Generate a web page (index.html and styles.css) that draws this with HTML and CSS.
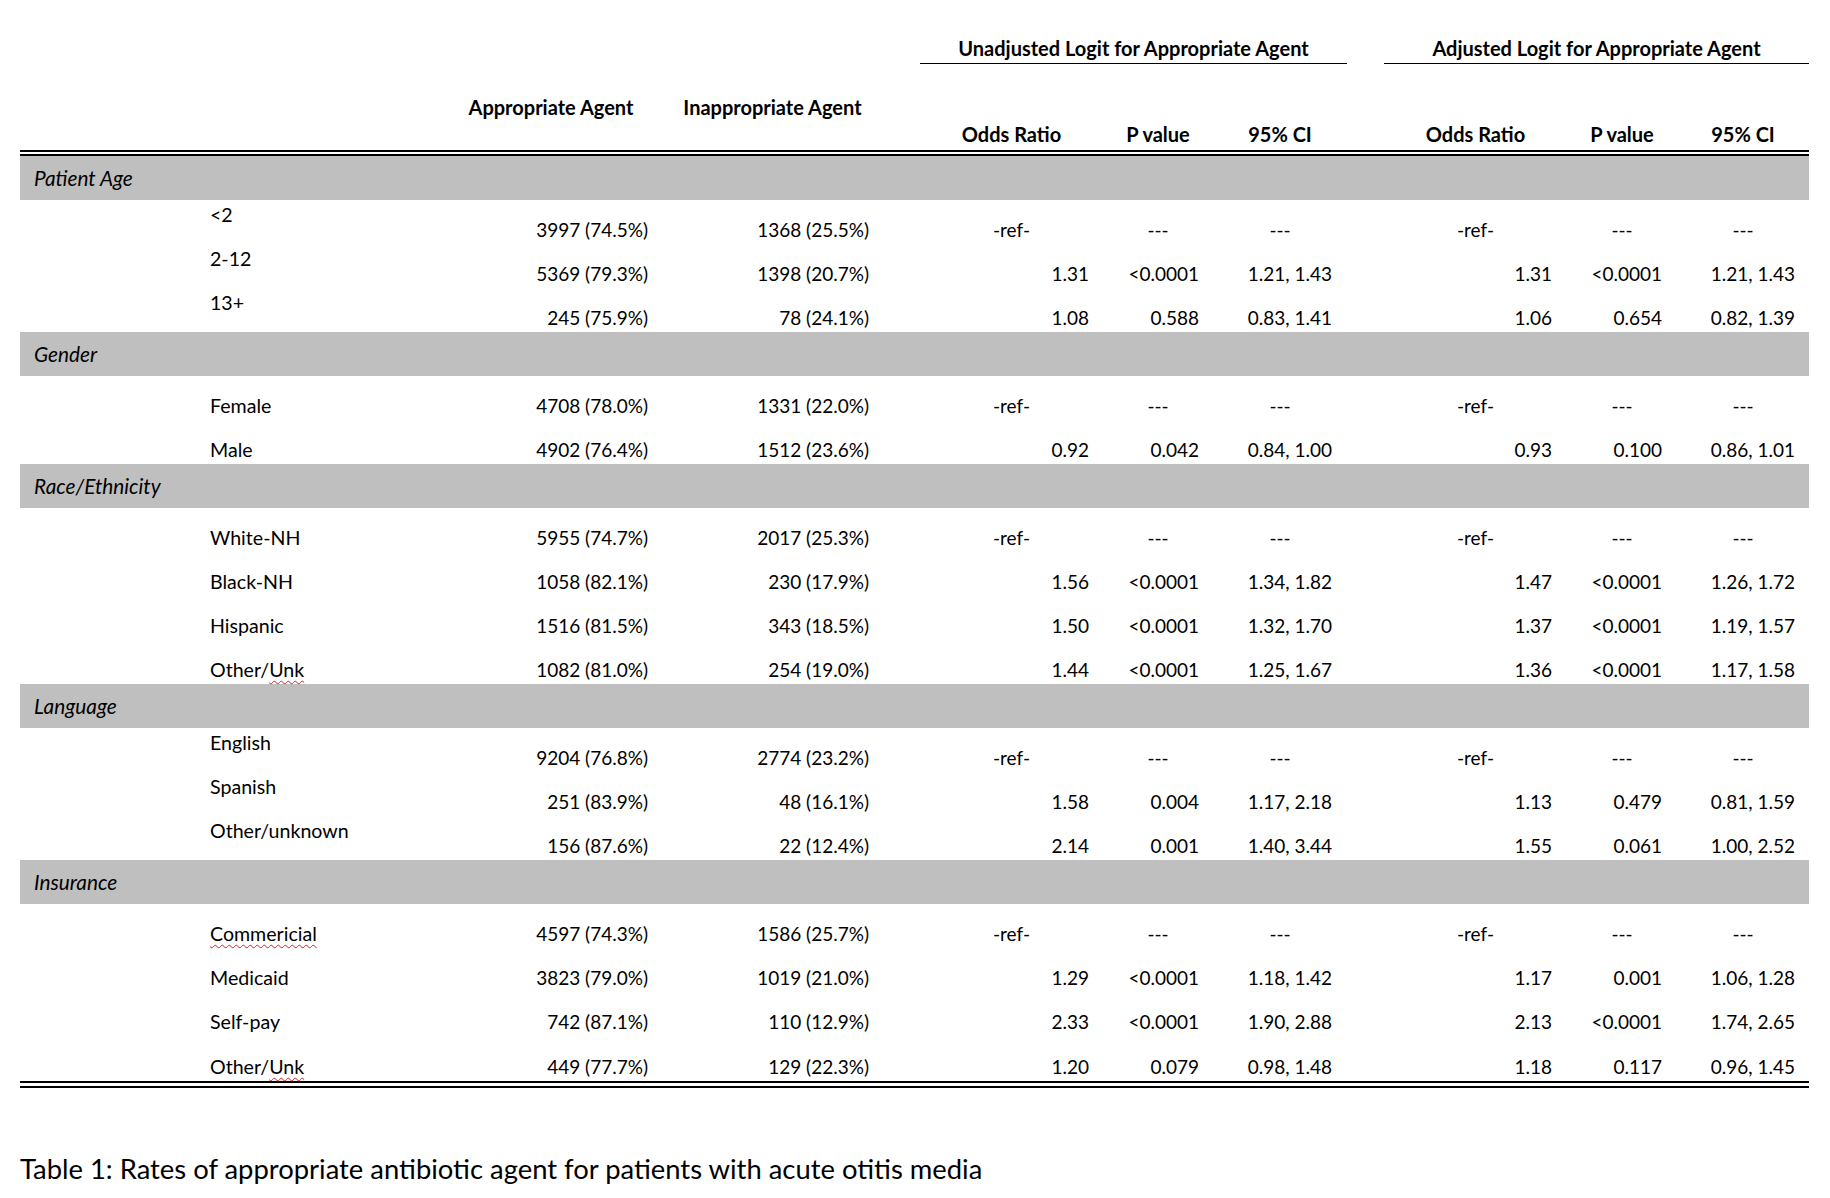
FILE: index.html
```html
<!DOCTYPE html>
<html lang="en">
<head>
<meta charset="utf-8">
<title>Table 1</title>
<link rel="stylesheet" href="styles.css">
</head>
<body>
<div class="page">
  <div class="tbl">
    <div class="grid hrow-top">
      <div class="span5"></div>
      <div class="grp span3">Unadjusted Logit for Appropriate Agent</div>
      <div></div>
      <div class="grp span3">Adjusted Logit for Appropriate Agent</div>
    </div>
    <div class="grid hrow-sub">
      <div></div><div></div>
      <div class="h h-main">Appropriate Agent</div>
      <div class="h h-main">Inappropriate Agent</div>
      <div></div>
      <div class="h">Odds Ratio</div>
      <div class="h">P value</div>
      <div class="h">95% CI</div>
      <div></div>
      <div class="h">Odds Ratio</div>
      <div class="h">P value</div>
      <div class="h">95% CI</div>
    </div>

    <div class="tbody">
      <div class="cat">Patient Age</div>
      <div class="grid row split">
        <div></div><div class="lbl">&lt;2</div><div class="num">3997 (74.5%)</div><div class="num">1368 (25.5%)</div><div></div>
        <div class="ctr">-ref-</div><div class="ctr">---</div><div class="ctr">---</div><div></div>
        <div class="ctr">-ref-</div><div class="ctr">---</div><div class="ctr">---</div>
      </div>
      <div class="grid row split">
        <div></div><div class="lbl">2-12</div><div class="num">5369 (79.3%)</div><div class="num">1398 (20.7%)</div><div></div>
        <div class="num">1.31</div><div class="num">&lt;0.0001</div><div class="num r15">1.21, 1.43</div><div></div>
        <div class="num r15">1.31</div><div class="num r15">&lt;0.0001</div><div class="num">1.21, 1.43</div>
      </div>
      <div class="grid row split">
        <div></div><div class="lbl">13+</div><div class="num">245 (75.9%)</div><div class="num">78 (24.1%)</div><div></div>
        <div class="num">1.08</div><div class="num">0.588</div><div class="num r15">0.83, 1.41</div><div></div>
        <div class="num r15">1.06</div><div class="num r15">0.654</div><div class="num">0.82, 1.39</div>
      </div>

      <div class="cat">Gender</div>
      <div class="grid row">
        <div></div><div class="lbl">Female</div><div class="num">4708 (78.0%)</div><div class="num">1331 (22.0%)</div><div></div>
        <div class="ctr">-ref-</div><div class="ctr">---</div><div class="ctr">---</div><div></div>
        <div class="ctr">-ref-</div><div class="ctr">---</div><div class="ctr">---</div>
      </div>
      <div class="grid row">
        <div></div><div class="lbl">Male</div><div class="num">4902 (76.4%)</div><div class="num">1512 (23.6%)</div><div></div>
        <div class="num">0.92</div><div class="num">0.042</div><div class="num r15">0.84, 1.00</div><div></div>
        <div class="num r15">0.93</div><div class="num r15">0.100</div><div class="num">0.86, 1.01</div>
      </div>

      <div class="cat">Race/Ethnicity</div>
      <div class="grid row">
        <div></div><div class="lbl">White-NH</div><div class="num">5955 (74.7%)</div><div class="num">2017 (25.3%)</div><div></div>
        <div class="ctr">-ref-</div><div class="ctr">---</div><div class="ctr">---</div><div></div>
        <div class="ctr">-ref-</div><div class="ctr">---</div><div class="ctr">---</div>
      </div>
      <div class="grid row">
        <div></div><div class="lbl">Black-NH</div><div class="num">1058 (82.1%)</div><div class="num">230 (17.9%)</div><div></div>
        <div class="num">1.56</div><div class="num">&lt;0.0001</div><div class="num r15">1.34, 1.82</div><div></div>
        <div class="num r15">1.47</div><div class="num r15">&lt;0.0001</div><div class="num">1.26, 1.72</div>
      </div>
      <div class="grid row">
        <div></div><div class="lbl">Hispanic</div><div class="num">1516 (81.5%)</div><div class="num">343 (18.5%)</div><div></div>
        <div class="num">1.50</div><div class="num">&lt;0.0001</div><div class="num r15">1.32, 1.70</div><div></div>
        <div class="num r15">1.37</div><div class="num r15">&lt;0.0001</div><div class="num">1.19, 1.57</div>
      </div>
      <div class="grid row">
        <div></div><div class="lbl">Other/<span class="sp">Unk</span></div><div class="num">1082 (81.0%)</div><div class="num">254 (19.0%)</div><div></div>
        <div class="num">1.44</div><div class="num">&lt;0.0001</div><div class="num r15">1.25, 1.67</div><div></div>
        <div class="num r15">1.36</div><div class="num r15">&lt;0.0001</div><div class="num">1.17, 1.58</div>
      </div>

      <div class="cat">Language</div>
      <div class="grid row split">
        <div></div><div class="lbl">English</div><div class="num">9204 (76.8%)</div><div class="num">2774 (23.2%)</div><div></div>
        <div class="ctr">-ref-</div><div class="ctr">---</div><div class="ctr">---</div><div></div>
        <div class="ctr">-ref-</div><div class="ctr">---</div><div class="ctr">---</div>
      </div>
      <div class="grid row split">
        <div></div><div class="lbl">Spanish</div><div class="num">251 (83.9%)</div><div class="num">48 (16.1%)</div><div></div>
        <div class="num">1.58</div><div class="num">0.004</div><div class="num r15">1.17, 2.18</div><div></div>
        <div class="num r15">1.13</div><div class="num r15">0.479</div><div class="num">0.81, 1.59</div>
      </div>
      <div class="grid row split">
        <div></div><div class="lbl">Other/unknown</div><div class="num">156 (87.6%)</div><div class="num">22 (12.4%)</div><div></div>
        <div class="num">2.14</div><div class="num">0.001</div><div class="num r15">1.40, 3.44</div><div></div>
        <div class="num r15">1.55</div><div class="num r15">0.061</div><div class="num">1.00, 2.52</div>
      </div>

      <div class="cat">Insurance</div>
      <div class="grid row">
        <div></div><div class="lbl"><span class="sp">Commericial</span></div><div class="num">4597 (74.3%)</div><div class="num">1586 (25.7%)</div><div></div>
        <div class="ctr">-ref-</div><div class="ctr">---</div><div class="ctr">---</div><div></div>
        <div class="ctr">-ref-</div><div class="ctr">---</div><div class="ctr">---</div>
      </div>
      <div class="grid row">
        <div></div><div class="lbl">Medicaid</div><div class="num">3823 (79.0%)</div><div class="num">1019 (21.0%)</div><div></div>
        <div class="num">1.29</div><div class="num">&lt;0.0001</div><div class="num r15">1.18, 1.42</div><div></div>
        <div class="num r15">1.17</div><div class="num r15">0.001</div><div class="num">1.06, 1.28</div>
      </div>
      <div class="grid row">
        <div></div><div class="lbl">Self-pay</div><div class="num">742 (87.1%)</div><div class="num">110 (12.9%)</div><div></div>
        <div class="num">2.33</div><div class="num">&lt;0.0001</div><div class="num r15">1.90, 2.88</div><div></div>
        <div class="num r15">2.13</div><div class="num r15">&lt;0.0001</div><div class="num">1.74, 2.65</div>
      </div>
      <div class="grid row last">
        <div></div><div class="lbl">Other/<span class="sp">Unk</span></div><div class="num">449 (77.7%)</div><div class="num">129 (22.3%)</div><div></div>
        <div class="num">1.20</div><div class="num">0.079</div><div class="num r15">0.98, 1.48</div><div></div>
        <div class="num r15">1.18</div><div class="num r15">0.117</div><div class="num">0.96, 1.45</div>
      </div>
    </div>
  </div>
  <p class="caption">Table 1: Rates of appropriate antibiotic agent for patients with acute otitis media</p>
</div>
</body>
</html>
```

FILE: styles.css
```css
html, body {
  margin: 0;
  padding: 0;
  background: #ffffff;
}

body {
  font-family: Lato, "Open Sans", "Liberation Sans", sans-serif;
  font-size: 19px;
  color: #000000;
}

.page {
  padding-left: 20px;
}

.tbl {
  width: 1789px;
}

.grid {
  display: grid;
  grid-template-columns: 175px 245px 222px 221px 37px 183px 110px 134px 37px 183px 110px 132px;
}

.span5 { grid-column: span 5; }
.span3 { grid-column: span 3; }

.hrow-top {
  height: 64px;
}

.grp {
  border-bottom: 1px solid #000;
  font-weight: 700;
  font-size: 20px;
  text-align: center;
  display: flex;
  align-items: flex-end;
  justify-content: center;
  padding-bottom: 3px;
  line-height: 1.2;
  white-space: nowrap;
}

.hrow-sub {
  height: 86px;
}

.h {
  font-weight: 700;
  font-size: 20px;
  text-align: center;
  align-self: end;
  padding-bottom: 4px;
  line-height: 1.2;
  white-space: nowrap;
}

.h-main {
  padding-bottom: 31px;
}

.tbody {
  border-top: 6px double #000;
  border-bottom: 7px double #000;
}

.cat {
  height: 44px;
  line-height: 44px;
  background: #bfbfbf;
  font-style: italic;
  font-size: 20.8px;
  padding-left: 14px;
}

.row {
  height: 44px;
  line-height: 23px;
}

.row > div {
  align-self: end;
  padding-bottom: 3px;
  white-space: nowrap;
}

.row .lbl {
  padding-left: 15px;
  font-size: 19.6px;
}

.row.split .lbl {
  align-self: start;
  padding-top: 3px;
  padding-bottom: 0;
}

.row .num {
  text-align: right;
  padding-right: 14px;
}

.row .num.r15 {
  padding-right: 15px;
}

.row .ctr {
  text-align: center;
}

.row.last {
  height: 45px;
}

.sp {
  text-decoration: underline wavy #e02020;
  text-decoration-thickness: 1px;
  text-underline-offset: 3px;
}

.caption {
  margin: 64px 0 0 0;
  font-size: 27.4px;
  line-height: 33px;
}
```
